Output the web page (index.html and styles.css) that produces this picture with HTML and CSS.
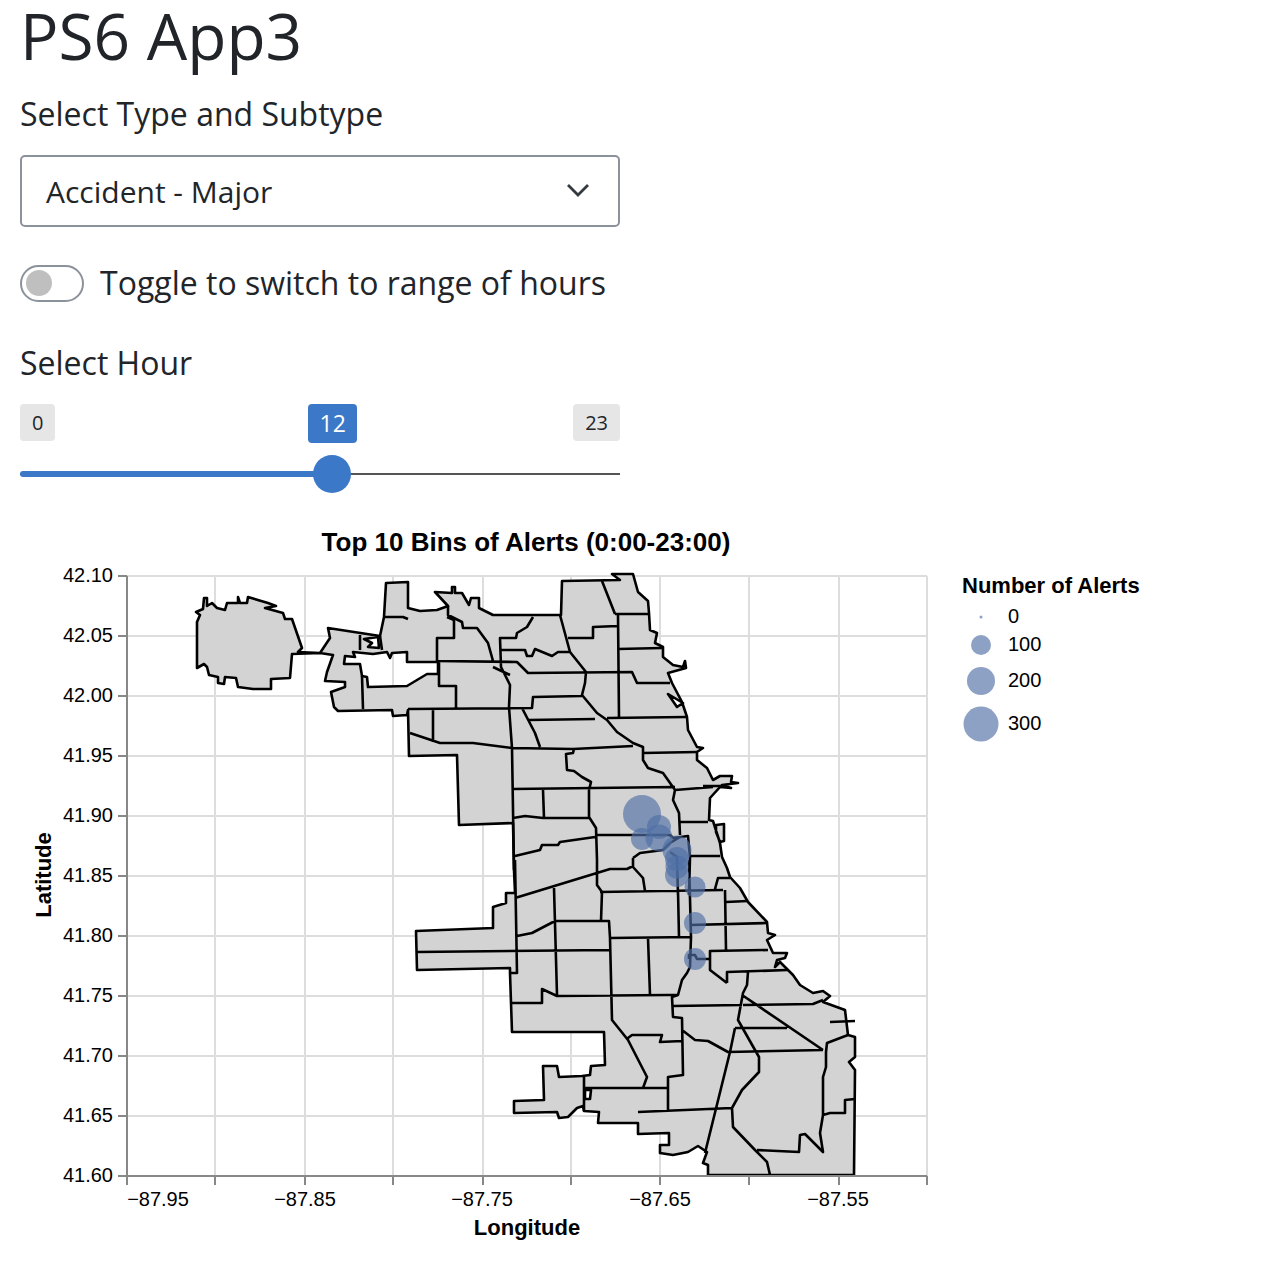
FILE: index.html
```html
<!DOCTYPE html>
<html>
<head>
  <title>PS6 App3</title>
  <link rel="stylesheet" href="styles.css">
</head>
<body>

<div class="container">
  <h1>PS6 App3</h1>

  <div class="field-label">Select Type and Subtype</div>
  <div class="select-box">
    <span>Accident - Major</span>
    <svg class="chevron" viewBox="0 0 24 14" width="24" height="14">
      <path d="M2 2 L12 12 L22 2" fill="none" stroke="#343a40" stroke-width="2.8"/>
    </svg>
  </div>

  <div class="toggle-row">
    <div class="toggle"><div class="toggle-knob"></div></div>
    <span>Toggle to switch to range of hours</span>
  </div>

  <div class="field-label hour-label">Select Hour</div>
  <div class="slider">
    <div class="slider-labels">
      <span class="tag">0</span>
      <span class="tag">23</span>
    </div>
    <span class="tag tag-value" style="left: 288px">12</span>
    <div class="track">
      <div class="track-fill" style="width: 312px"></div>
      <div class="thumb" style="left: 293px"></div>
    </div>
  </div>

  <svg class="chart" viewBox="20 520 1200 740" width="1200" height="740">
    <!-- grid -->
    <path class="grid" d="M215 576V1176M305 576V1176M393 576V1176M483 576V1176M571 576V1176M660 576V1176M749 576V1176M839 576V1176M927 576V1176
      M127 576H927M127 636H927M127 696H927M127 756H927M127 816H927M127 876H927M127 936H927M127 996H927M127 1056H927M127 1116H927"/>

    <!-- map outline, holes use evenodd -->
    <path class="map" fill-rule="evenodd" d="
      M196 612 L203 609 L204 598 L207 598 L207 606 L212 603 L217 608 L225 610 L227 603 L238 603 L238 597 L240 603 L247 603 L248 597 L268 603 L276 606 L265 608 L283 613 L285 619 L292 619 L302 648 L298 652 L320 653
      L330 638 L328 628 L380 636 L384 617 L386 583 L408 582 L408 608 L420 611 L437 610 L448 606 L435 592 L452 593 L452 587 L455 587 L455 593 L462 593 L469 605 L471 598 L479 598 L479 608 L493 615 L561 615 L562 581 L620 580 L612 574 L633 574 L638 592 L648 601 L649 613 L650 630 L657 633 L655 643 L663 647 L663 657 L673 665 L683 667 L685 661 L686 668 L668 673 L672 683 L682 702 L687 717 L688 730 L697 747 L703 748 L697 752 L697 760 L707 768 L713 780 L720 776 L732 776 L731 782 L738 783 L722 785 L731 788 L720 787 L710 798 L709 820 L713 821 L720 843 L722 857 L727 868 L730 877 L740 888 L748 902 L767 922 L768 933 L775 935 L767 940 L773 953 L787 953 L785 958 L777 960 L775 967 L780 962 L793 975 L800 985 L813 993 L823 991 L830 996 L823 1002 L845 1010 L848 1035 L855 1037 L855 1057 L849 1062 L855 1070 L854 1175 L708 1175 L708 1165 L703 1163 L707 1152 L698 1146 L688 1152 L673 1155 L660 1153 L660 1145 L669 1145 L669 1133 L638 1134 L638 1123 L598 1123 L599 1112 L584 1111 L583 1106 L577 1108 L568 1117 L559 1118 L557 1112 L514 1113 L514 1101 L544 1100 L543 1066 L557 1066 L559 1077 L582 1076 L590 1075 L591 1066 L605 1065 L604 1032 L512 1032 L510 973 L510 968 L417 970 L416 931 L493 928 L493 907 L506 903 L506 893 L515 893 L514 870 L513 823 L459 825 L457 755 L409 756 L408 710 L407 715 L393 716 L392 710 L338 711 L334 707 L331 692 L345 687 L345 682 L325 681 L327 672 L333 655 L320 653
      L292 654 L290 678 L271 679 L271 689 L253 689 L238 687 L236 678 L225 677 L224 684 L218 683 L218 677 L209 675 L207 667 L204 664 L197 668 L197 622 L200 615 Z
      M345 656 L344 664 L360 664 L362 676 L367 677 L368 687 L407 686 L427 674 L438 674 L438 662 L407 662 L407 652 L392 653 L390 658 L387 652 L373 654 L353 652 L355 657 Z
      M364 639 L378 637 L379 648 L368 647 L372 643 Z
      M668 694 L683 703 L677 707 Z
      M716 825 L724 824 L724 841 L720 842 L716 832 Z
      M585 1090 L591 1090 L590 1099 L585 1099 Z"/>

    <!-- community area lines -->
    <path class="lines" d="
      M360 635 L360 650 M362 676 L363 709 M380 636 L382 650
      M384 617 L403 617 L408 619 M447 617 L454 620 L454 638 L437 638 L437 662
      M448 606 L448 615 L462 622 L463 628 L477 628 L488 643 L493 661
      M533 617 L527 627 L517 633 L516 638 L500 638 L501 667 L510 685 L509 707 L512 748 L514 870
      M500 650 L525 650 L527 656 L532 656 L535 649 L552 656 L558 652 L570 652
      M560 615 L570 652 L586 672 L585 683 L582 695 L597 713 L607 720 L617 732 L633 743 L643 747 L643 760 L648 768 L663 773 L675 790 L673 800 L679 813 L680 835
      M437 661 L517 662 L528 673 L632 672 L637 683 L670 683
      M493 667 L510 675
      M439 662 L439 686 L456 686 L456 708
      M408 709 L532 708 L533 697 L582 696
      M433 710 L433 742
      M410 733 L440 743 L473 743 L512 748 L573 749 L633 746
      M522 708 L535 733 L540 747
      M528 720 L595 719 M607 718 L686 717
      M618 615 L619 718 M615 614 L648 614 M602 581 L615 614
      M568 638 L593 638 L593 627 L617 626
      M618 649 L662 648
      M574 749 L573 753 L566 754 L567 770 L574 771 L582 777 L591 782 L589 790 L589 817 L596 828 L597 860 L597 885 L602 892
      M513 789 L675 787 M675 790 L713 787
      M543 790 L544 818 M513 818 L525 816 L543 818 L590 818
      M515 856 L540 850 L542 845 L558 845 L560 842 L595 837
      M597 835 L670 835 L673 838 L688 836 L690 857 L689 895
      M633 858 L640 853 L663 850 L670 843 L680 837
      M670 852 L677 857 L678 895
      M690 856 L720 856
      M643 753 L697 752
      M680 822 L708 822
      M515 898 L610 869 L627 869 L633 866 L633 858
      M633 867 L643 878 L645 891
      M600 892 L723 890 M715 889 L718 878 L730 878 M725 890 L726 950
      M678 891 L679 937
      M554 888 L557 995
      M602 892 L601 921
      M517 936 L532 933 L555 921 L609 921 L610 938 L612 1020 L628 1040 L647 1077 L643 1088
      M610 938 L691 937 M417 952 L610 950
      M648 938 L650 995
      M515 860 L517 973 L510 973
      M512 1003 L542 1003 L542 989 L557 996 L667 995 L678 995
      M689 860 L691 937 L690 967 L687 973 L682 980 L678 995 L672 997 L673 1017 L682 1018 L683 1075 L668 1077 L668 1110
      M628 1038 L632 1035 L662 1035 L660 1042 L682 1041
      M583 1088 L667 1088 M584 1076 L584 1111
      M638 1112 L732 1108
      M673 1006 L742 1005
      M682 1030 L695 1040 L708 1041 L728 1052 L823 1050
      M743 1005 L813 1004 L823 1000
      M742 995 L823 1050
      M727 983 L710 970 L710 951 L768 950
      M727 983 L727 972 L788 970
      M748 972 L747 985 L743 993 L738 1020 L755 1050 L759 1057 L759 1072 L742 1090 L732 1108 L733 1127 L755 1150 L767 1162 L770 1175
      M735 1028 L787 1028 M735 1028 L730 1052 L705 1153
      M757 1150 L799 1152 L800 1135 L805 1134 L823 1152 L820 1133 L823 1115 L823 1077 L826 1067 L826 1052 L827 1043 L848 1035
      M823 1115 L830 1113 L845 1113 L845 1100 L855 1099
      M726 902 L748 901 M690 925 L767 923
      M710 959 L697 959 L695 955 L689 955 L689 959
      M830 1022 L855 1021
      M703 786 L724 786"/>

    <!-- bins -->
    <g class="bins">
      <circle cx="642" cy="814" r="19"/>
      <circle cx="659" cy="827" r="12"/>
      <circle cx="642" cy="839" r="11"/>
      <circle cx="659" cy="838" r="13.5"/>
      <circle cx="677" cy="850" r="14.5"/>
      <circle cx="677" cy="859" r="12"/>
      <circle cx="677" cy="867" r="11.5"/>
      <circle cx="677" cy="875" r="12"/>
      <circle cx="695" cy="887" r="10.5"/>
      <circle cx="695" cy="923" r="11"/>
      <circle cx="695" cy="959" r="11"/>
    </g>

    <!-- axes -->
    <path class="axis" d="M127 576V1176H927
      M118 576H127M118 636H127M118 696H127M118 756H127M118 816H127M118 876H127M118 936H127M118 996H127M118 1056H127M118 1116H127M118 1176H127
      M127 1176V1185M215 1176V1185M305 1176V1185M393 1176V1185M483 1176V1185M571 1176V1185M660 1176V1185M749 1176V1185M839 1176V1185M927 1176V1185"/>

    <g class="tick-y">
      <text x="113" y="582">42.10</text>
      <text x="113" y="642">42.05</text>
      <text x="113" y="702">42.00</text>
      <text x="113" y="762">41.95</text>
      <text x="113" y="822">41.90</text>
      <text x="113" y="882">41.85</text>
      <text x="113" y="942">41.80</text>
      <text x="113" y="1002">41.75</text>
      <text x="113" y="1062">41.70</text>
      <text x="113" y="1122">41.65</text>
      <text x="113" y="1182">41.60</text>
    </g>
    <g class="tick-x">
      <text x="158" y="1206">−87.95</text>
      <text x="305" y="1206">−87.85</text>
      <text x="482" y="1206">−87.75</text>
      <text x="660" y="1206">−87.65</text>
      <text x="838" y="1206">−87.55</text>
    </g>

    <text class="chart-title" x="526" y="551">Top 10 Bins of Alerts (0:00-23:00)</text>
    <text class="axis-title" x="527" y="1235">Longitude</text>
    <text class="axis-title" transform="translate(51 875) rotate(-90)">Latitude</text>

    <!-- legend -->
    <text class="legend-title" x="962" y="593">Number of Alerts</text>
    <g class="bins">
      <circle cx="981" cy="617" r="1.5"/>
      <circle cx="981" cy="645" r="10"/>
      <circle cx="981" cy="681" r="14"/>
      <circle cx="981" cy="724" r="17.5"/>
    </g>
    <g class="legend-label">
      <text x="1008" y="623">0</text>
      <text x="1008" y="651">100</text>
      <text x="1008" y="687">200</text>
      <text x="1008" y="730">300</text>
    </g>
  </svg>
</div>

</body>
</html>
```

FILE: styles.css
```css
body {
  font-family: 'Open Sans', sans-serif;
  background-color: #fff;
  margin: 0;
  color: #212529;
}

.container {
  padding: 0 20px;
}

h1 {
  font-size: 64px;
  font-weight: 400;
  line-height: 72px;
  margin: 0 0 21px;
}

.field-label {
  font-size: 32px;
  line-height: 42px;
  margin-bottom: 20px;
}

.select-box {
  width: 600px;
  height: 72px;
  box-sizing: border-box;
  border: 2px solid #8b929c;
  border-radius: 5px;
  padding: 0 28px 0 24px;
  display: flex;
  align-items: center;
  justify-content: space-between;
  font-size: 30px;
}

.chevron {
  margin-bottom: 3px;
}

.toggle-row {
  display: flex;
  align-items: center;
  gap: 16px;
  margin-top: 34px;
  font-size: 32px;
  line-height: 44px;
}

.toggle {
  width: 64px;
  height: 37px;
  box-sizing: border-box;
  border: 2px solid #8b929c;
  border-radius: 19px;
  display: flex;
  align-items: center;
  padding-left: 4px;
}

.toggle-knob {
  width: 26px;
  height: 26px;
  border-radius: 50%;
  background-color: #bfbfbf;
}

.hour-label {
  margin-top: 37px;
  margin-bottom: 20px;
}

.slider {
  position: relative;
  width: 600px;
  height: 116px;
}

.slider-labels {
  display: flex;
  justify-content: space-between;
}

.tag {
  background-color: #e6e6e6;
  border-radius: 4px;
  font-size: 20px;
  line-height: 37px;
  height: 37px;
  padding: 0 12px;
}

.tag-value {
  position: absolute;
  top: 0;
  height: 39px;
  line-height: 39px;
  padding: 0 11.5px;
  font-size: 23px;
  background-color: #3c78c8;
  color: #fff;
}

.track {
  position: absolute;
  left: 0;
  right: 0;
  top: 69px;
  height: 2px;
  background-color: #555;
}

.track-fill {
  position: absolute;
  left: 0;
  top: -2px;
  height: 6px;
  border-radius: 3px;
  background-color: #3c78c8;
}

.thumb {
  position: absolute;
  top: -18px;
  width: 38px;
  height: 38px;
  border-radius: 50%;
  background-color: #3c78c8;
}

.chart {
  display: block;
  font-family: 'Liberation Sans', sans-serif;
  fill: #000;
}

.grid {
  fill: none;
  stroke: #ddd;
  stroke-width: 2;
}

.axis {
  fill: none;
  stroke: #888;
  stroke-width: 2;
}

.map {
  fill: #d3d3d3;
  stroke: #000;
  stroke-width: 2.6;
  stroke-linejoin: round;
}

.lines {
  fill: none;
  stroke: #000;
  stroke-width: 2.6;
  stroke-linejoin: round;
}

.bins circle {
  fill: #4e6ea5;
  fill-opacity: 0.65;
}

.tick-y text {
  font-size: 20px;
  text-anchor: end;
}

.tick-x text {
  font-size: 20px;
  text-anchor: middle;
}

.chart-title {
  font-size: 26px;
  font-weight: bold;
  text-anchor: middle;
}

.axis-title {
  font-size: 22px;
  font-weight: bold;
  text-anchor: middle;
}

.legend-title {
  font-size: 22px;
  font-weight: bold;
}

.legend-label text {
  font-size: 20px;
}
```
